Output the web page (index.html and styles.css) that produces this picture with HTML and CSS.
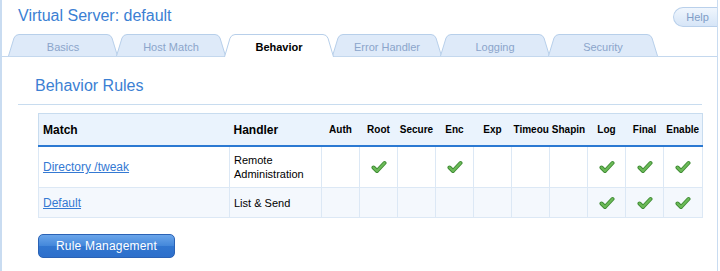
FILE: index.html
```html
<!DOCTYPE html>
<html lang="en">
<head>
  <meta charset="UTF-8" />
  <meta name="viewport" content="width=device-width, initial-scale=1.0"/>
  <title>Virtual Server: default</title>
  <link rel="stylesheet" href="styles.css">
</head>
<body>

  <div class="frame">
    <div class="top">
      <h1>Virtual Server: default</h1>
      <a class="help" href="#">Help</a>
    </div>

    <!-- Tabs -->
    <ul class="tabs">
      <li class="tab"><svg class="tab-shape" viewBox="0 0 110 22" preserveAspectRatio="none"><path d="M0.5 22 L6 4 Q7.5 0.5 11 0.5 L99 0.5 Q102.5 0.5 104 4 L109.5 22"/></svg><span>Basics</span></li>
      <li class="tab"><svg class="tab-shape" viewBox="0 0 110 22" preserveAspectRatio="none"><path d="M0.5 22 L6 4 Q7.5 0.5 11 0.5 L99 0.5 Q102.5 0.5 104 4 L109.5 22"/></svg><span>Host Match</span></li>
      <li class="tab active"><svg class="tab-shape" viewBox="0 0 110 22" preserveAspectRatio="none"><path d="M0.5 22 L6 4 Q7.5 0.5 11 0.5 L99 0.5 Q102.5 0.5 104 4 L109.5 22"/></svg><span>Behavior</span></li>
      <li class="tab"><svg class="tab-shape" viewBox="0 0 110 22" preserveAspectRatio="none"><path d="M0.5 22 L6 4 Q7.5 0.5 11 0.5 L99 0.5 Q102.5 0.5 104 4 L109.5 22"/></svg><span>Error Handler</span></li>
      <li class="tab"><svg class="tab-shape" viewBox="0 0 110 22" preserveAspectRatio="none"><path d="M0.5 22 L6 4 Q7.5 0.5 11 0.5 L99 0.5 Q102.5 0.5 104 4 L109.5 22"/></svg><span>Logging</span></li>
      <li class="tab"><svg class="tab-shape" viewBox="0 0 110 22" preserveAspectRatio="none"><path d="M0.5 22 L6 4 Q7.5 0.5 11 0.5 L99 0.5 Q102.5 0.5 104 4 L109.5 22"/></svg><span>Security</span></li>
    </ul>

    <div class="panel">
      <h2>Behavior Rules</h2>

      <table class="rules">
        <colgroup>
          <col class="w-match"><col class="w-handler">
          <col class="w-flag"><col class="w-flag"><col class="w-flag"><col class="w-flag"><col class="w-flag">
          <col class="w-flag"><col class="w-flag"><col class="w-flag"><col class="w-flag"><col class="w-last">
        </colgroup>
        <thead>
          <tr>
            <th>Match</th>
            <th>Handler</th>
            <th class="flag">Auth</th>
            <th class="flag">Root</th>
            <th class="flag">Secure</th>
            <th class="flag">Enc</th>
            <th class="flag">Exp</th>
            <th class="flag">Timeou</th>
            <th class="flag">Shapin</th>
            <th class="flag">Log</th>
            <th class="flag">Final</th>
            <th class="flag">Enable</th>
          </tr>
        </thead>
        <tbody>
          <tr class="row-tall">
            <td><a href="#">Directory /tweak</a></td>
            <td class="handler">Remote Administration</td>
            <td></td>
            <td class="on"><svg class="check" viewBox="0 0 16 14"><path class="check-edge" d="M2.5 7.5 L6 11 L13.5 3"/><path class="check-fill" d="M2.5 7.5 L6 11 L13.5 3"/></svg></td>
            <td></td>
            <td class="on"><svg class="check" viewBox="0 0 16 14"><path class="check-edge" d="M2.5 7.5 L6 11 L13.5 3"/><path class="check-fill" d="M2.5 7.5 L6 11 L13.5 3"/></svg></td>
            <td></td>
            <td></td>
            <td></td>
            <td class="on"><svg class="check" viewBox="0 0 16 14"><path class="check-edge" d="M2.5 7.5 L6 11 L13.5 3"/><path class="check-fill" d="M2.5 7.5 L6 11 L13.5 3"/></svg></td>
            <td class="on"><svg class="check" viewBox="0 0 16 14"><path class="check-edge" d="M2.5 7.5 L6 11 L13.5 3"/><path class="check-fill" d="M2.5 7.5 L6 11 L13.5 3"/></svg></td>
            <td class="on"><svg class="check" viewBox="0 0 16 14"><path class="check-edge" d="M2.5 7.5 L6 11 L13.5 3"/><path class="check-fill" d="M2.5 7.5 L6 11 L13.5 3"/></svg></td>
          </tr>
          <tr class="row-alt">
            <td><a href="#">Default</a></td>
            <td class="handler">List &amp; Send</td>
            <td></td>
            <td></td>
            <td></td>
            <td></td>
            <td></td>
            <td></td>
            <td></td>
            <td class="on"><svg class="check" viewBox="0 0 16 14"><path class="check-edge" d="M2.5 7.5 L6 11 L13.5 3"/><path class="check-fill" d="M2.5 7.5 L6 11 L13.5 3"/></svg></td>
            <td class="on"><svg class="check" viewBox="0 0 16 14"><path class="check-edge" d="M2.5 7.5 L6 11 L13.5 3"/><path class="check-fill" d="M2.5 7.5 L6 11 L13.5 3"/></svg></td>
            <td class="on"><svg class="check" viewBox="0 0 16 14"><path class="check-edge" d="M2.5 7.5 L6 11 L13.5 3"/><path class="check-fill" d="M2.5 7.5 L6 11 L13.5 3"/></svg></td>
          </tr>
        </tbody>
      </table>

      <button class="btn" type="button">Rule Management</button>
    </div>
  </div>

</body>
</html>
```

FILE: styles.css
```css
body {
  margin: 0;
  font-family: "Liberation Sans", Arial, sans-serif;
  background-color: #fff;
  color: #000;
}

.frame {
  box-sizing: border-box;
  width: 718px;
  height: 100vh;
  border-left: 2px solid #c9dcf1;
  border-right: 1px solid #c9dcf1;
}

/* Header */
.top {
  display: flex;
  justify-content: space-between;
  align-items: flex-start;
  height: 34px;
}

h1 {
  margin: 0;
  padding: 6px 0 0 16px;
  font-size: 16px;
  line-height: 20px;
  font-weight: normal;
  color: #3b80d3;
}

.help {
  box-sizing: border-box;
  margin-top: 7px;
  width: 44px;
  height: 20px;
  padding-left: 4px;
  border: 1px solid #b9d0eb;
  border-right: none;
  border-radius: 10px 0 0 10px;
  background: linear-gradient(#f0f6fd, #d6e5f7);
  font-size: 11px;
  line-height: 18px;
  text-align: center;
  color: #809dc7;
  text-decoration: none;
}

/* Tabs */
.tabs {
  list-style: none;
  margin: 0;
  padding: 0 0 0 6px;
  display: flex;
  align-items: flex-start;
  height: 22px;
  border-bottom: 1px solid #c4d8ee;
}

.tab {
  position: relative;
  display: flex;
  justify-content: center;
  align-items: center;
  flex: none;
  width: 110px;
  height: 22px;
  margin-right: -2px;
  padding-top: 3px;
  box-sizing: border-box;
  font-size: 11px;
  color: #8ba5cb;
}

.tab span {
  position: relative;
}

.tab-shape {
  position: absolute;
  left: 0;
  top: 0;
  width: 100%;
  height: 100%;
}

.tab-shape path {
  fill: #deeaf9;
  stroke: #b7cfea;
  stroke-width: 1;
  vector-effect: non-scaling-stroke;
}

.tab.active {
  z-index: 2;
  height: 23px;
  margin-bottom: -1px;
  font-weight: bold;
  color: #000;
}

.tab.active .tab-shape path {
  fill: #fff;
}

/* Panel */
.panel {
  padding: 0 15px 0 16px;
}

h2 {
  margin: 0;
  padding: 19px 0 8px 17px;
  font-size: 16px;
  line-height: 20px;
  font-weight: normal;
  color: #3b80d3;
  border-bottom: 1px solid #c8dcef;
}

.rules {
  margin: 8px 0 0 20px;
  width: 664px;
  border-collapse: collapse;
  table-layout: fixed;
  border: 1px solid #c8dcef;
}

.w-match { width: 191px; }
.w-handler { width: 92px; }
.w-flag { width: 38px; }
.w-last { width: 39px; }

.rules th {
  height: 31px;
  padding: 0 4px;
  background-color: #eaf3fd;
  border-bottom: 2px solid #2b79d2;
  text-align: left;
  font-size: 12px;
  font-weight: bold;
  white-space: nowrap;
}

.rules th.flag {
  padding: 0 2px;
  text-align: center;
  font-size: 10px;
}

.rules td {
  padding: 0 4px;
  border: 1px solid #dce8f5;
  font-size: 11px;
  vertical-align: middle;
}

.rules td a {
  font-size: 12px;
  color: #3479d3;
}

.rules .handler {
  line-height: 14px;
}

.row-tall td {
  height: 40px;
}

.row-alt td {
  height: 29px;
  background-color: #f4f8fd;
}

.rules td.on {
  padding: 0;
  text-align: center;
}

.check {
  display: block;
  width: 16px;
  height: 14px;
  margin: 0 auto;
}

.check path {
  fill: none;
  stroke-linecap: round;
  stroke-linejoin: round;
}

.check-edge {
  stroke: #3e8a33;
  stroke-width: 4;
}

.check-fill {
  stroke: #6cba58;
  stroke-width: 2.2;
}

/* Button */
.btn {
  display: block;
  margin: 16px 0 0 20px;
  width: 137px;
  height: 24px;
  padding: 0;
  border: 1px solid #2a62b5;
  border-radius: 5px;
  background: linear-gradient(#6aa5ea, #4387da 50%, #3176d0 51%, #2d6fcb);
  color: #fff;
  font-family: "Liberation Sans", Arial, sans-serif;
  font-size: 12px;
  letter-spacing: 0.2px;
  cursor: pointer;
}
```
